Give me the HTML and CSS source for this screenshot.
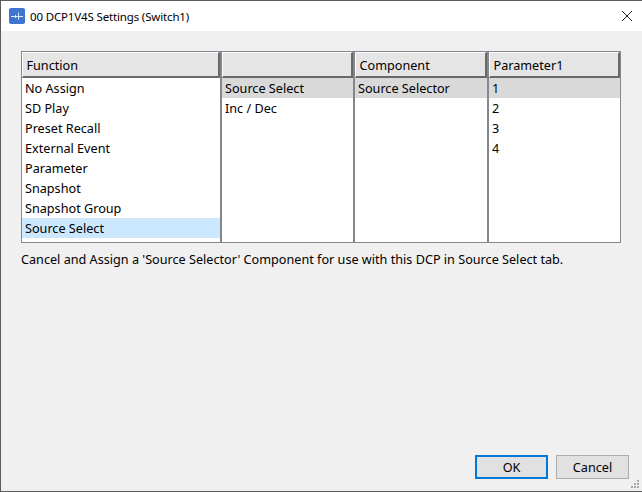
FILE: index.html
```html
<!DOCTYPE html>
<html lang="en">
<head>
    <meta charset="UTF-8">
    <title>00 DCP1V4S Settings (Switch1)</title>
    <link rel="stylesheet" href="styles.css">
</head>
<body>
    <div class="ventana">
        <div class="titulo">
            <svg class="logo" width="16" height="16" viewBox="0 0 16 16">
                <rect x="0" y="0" width="16" height="16" rx="2" fill="#3f74cf"/>
                <path d="M2 8.5H14" stroke="#dfe8f7" stroke-width="1"/>
                <path d="M9.5 4.5V11.5" stroke="#dfe8f7" stroke-width="1"/>
                <path d="M6.5 7V10" stroke="#dfe8f7" stroke-width="1"/>
            </svg>
            <span class="titulo-texto">00 DCP1V4S Settings (Switch1)</span>
            <svg class="cerrar" width="10" height="10" viewBox="0 0 10 10">
                <path d="M0 0L10 10M10 0L0 10" stroke="#222" stroke-width="1" fill="none"/>
            </svg>
        </div>
        <div class="contenido">
            <div class="tabla">
                <div class="columna col-funcion">
                    <div class="cabecera">Function</div>
                    <div class="fila">No Assign</div>
                    <div class="fila">SD Play</div>
                    <div class="fila">Preset Recall</div>
                    <div class="fila">External Event</div>
                    <div class="fila">Parameter</div>
                    <div class="fila">Snapshot</div>
                    <div class="fila">Snapshot Group</div>
                    <div class="fila activa">Source Select</div>
                </div>
                <div class="columna">
                    <div class="cabecera"></div>
                    <div class="fila marcada">Source Select</div>
                    <div class="fila">Inc / Dec</div>
                </div>
                <div class="columna col-componente">
                    <div class="cabecera">Component</div>
                    <div class="fila marcada">Source Selector</div>
                </div>
                <div class="columna">
                    <div class="cabecera">Parameter1</div>
                    <div class="fila marcada">1</div>
                    <div class="fila">2</div>
                    <div class="fila">3</div>
                    <div class="fila">4</div>
                </div>
            </div>
            <p class="aviso">Cancel and Assign a 'Source Selector' Component for use with this DCP in Source Select tab.</p>
            <div class="botones">
                <button class="boton principal">OK</button>
                <button class="boton">Cancel</button>
            </div>
        </div>
        <svg class="agarre" width="10" height="10" viewBox="0 0 10 10" fill="#a8a8a8">
            <rect x="7" y="1" width="2" height="2"/>
            <rect x="4" y="4" width="2" height="2"/>
            <rect x="7" y="4" width="2" height="2"/>
            <rect x="1" y="7" width="2" height="2"/>
            <rect x="4" y="7" width="2" height="2"/>
            <rect x="7" y="7" width="2" height="2"/>
        </svg>
    </div>
</body>
</html>
```

FILE: styles.css
```css
* {
    box-sizing: border-box;
}
html, body {
    margin: 0;
    height: 100%;
}
body {
    font-family: "Noto Sans", sans-serif;
    font-size: 12.65px;
    color: #000;
    overflow: hidden;
}
.ventana {
    position: relative;
    width: 642px;
    height: 492px;
    display: flex;
    flex-direction: column;
    background: #f0f0f0;
    border-left: 1px solid #5c5c5c;
    border-top: 1px solid #5c5c5c;
    border-bottom: 1px solid #5c5c5c;
}
.titulo {
    height: 30px;
    flex: none;
    display: flex;
    align-items: center;
    padding: 0 10px 0 8px;
    background: #fff;
}
.logo {
    margin-right: 5px;
}
.titulo-texto {
    font-size: 11.5px;
    letter-spacing: -0.15px;
    flex: 1;
}
.contenido {
    flex: 1;
    display: flex;
    flex-direction: column;
    padding: 20px 13px 12px 20px;
}
.tabla {
    display: flex;
    width: 600px;
    height: 192px;
    background: #828790;
    padding: 1px;
    gap: 2px;
}
.columna {
    flex: 0 0 131px;
    background: #fff;
}
.col-funcion {
    flex: 0 0 198px;
}
.col-componente {
    flex: 0 0 132px;
}
.cabecera {
    height: 26px;
    padding: 2px 0 0 3.5px;
    line-height: 21px;
    background: #e5e5e5;
    border-top: 1px solid #fff;
    border-left: 1px solid #fff;
    border-right: 2px solid #696969;
    border-bottom: 2px solid #696969;
}
.fila {
    height: 20px;
    line-height: 21px;
    padding-left: 3px;
}
.marcada {
    background: #d9d9d9;
}
.activa {
    background: #cce8ff;
}
.aviso {
    margin: 6px 0 0 0;
    line-height: 20px;
}
.botones {
    margin-top: auto;
    display: flex;
    justify-content: flex-end;
    gap: 8px;
}
.boton {
    width: 73px;
    height: 24px;
    font-family: inherit;
    font-size: 12.65px;
    padding: 0;
    background: #e1e1e1;
    border: 1px solid #adadad;
}
.principal {
    border: 2px solid #0078d7;
}
.agarre {
    position: absolute;
    right: 2px;
    bottom: 2px;
}
```
